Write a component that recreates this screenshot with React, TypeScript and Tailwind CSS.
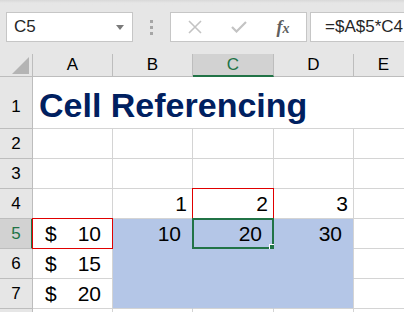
import React from 'react';

const cols = [
  { id: 'A', w: 'w-[80px]' },
  { id: 'B', w: 'w-[80px]' },
  { id: 'C', w: 'w-[81px]' },
  { id: 'D', w: 'w-[80px]' },
  { id: 'E', w: 'w-[60px]' },
];

const rows = [
  { n: 1, h: 'h-[52px]' },
  { n: 2, h: 'h-[30px]' },
  { n: 3, h: 'h-[30px]' },
  { n: 4, h: 'h-[30px]' },
  { n: 5, h: 'h-[30px]' },
  { n: 6, h: 'h-[30px]' },
  { n: 7, h: 'h-[30px]' },
  { n: 8, h: 'h-[30px]' },
];

const money: Record<number, string> = { 5: '10', 6: '15', 7: '20' };
const top: Record<string, string> = { B: '1', C: '2', D: '3' };
const mid: Record<string, string> = { B: '10', C: '20', D: '30' };

const inSel = (r: number, c: string) => r >= 5 && r <= 7 && ['B', 'C', 'D'].includes(c);

function Cell({ r, c, w }: { r: number; c: string; w: string }) {
  const sel = inSel(r, c);
  const selRight = sel && c !== 'D';
  const selBottom = sel && r !== 7;
  let content: React.ReactNode = null;
  if (c === 'A' && money[r]) {
    content = (
      <div className="flex w-full items-center justify-between pl-[12px] pr-[11px]">
        <span>$</span>
        <span>{money[r]}</span>
      </div>
    );
  } else if (r === 4 && top[c]) {
    content = <div className="w-full text-right pr-[5px]">{top[c]}</div>;
  } else if (r === 5 && mid[c]) {
    content = <div className="w-full text-right pr-[11px]">{mid[c]}</div>;
  }
  return (
    <div
      className={`relative flex shrink-0 items-center ${w} border-b border-r ${
        sel ? 'bg-[#b4c6e7]' : 'bg-white'
      } ${selRight ? 'border-r-[#b4c6e7]' : 'border-r-[#d4d4d4]'} ${
        selBottom ? 'border-b-[#b4c6e7]' : 'border-b-[#d4d4d4]'
      }`}
    >
      {content}
      {((r === 5 && c === 'A') || (r === 4 && c === 'C')) && (
        <div className="pointer-events-none absolute -left-[1px] -top-[1px] -right-[1px] -bottom-[1px] border border-[#e00000]" />
      )}
      {r === 5 && c === 'C' && (
        <div className="pointer-events-none absolute -left-[1px] -top-[1px] -right-[1px] -bottom-[1px] border-2 border-[#217346]">
          <div className="absolute -right-[4px] -bottom-[4px] h-[6px] w-[6px] bg-[#217346] outline outline-1 outline-white" />
        </div>
      )}
    </div>
  );
}

export default function App() {
  return (
    <div
      className="h-[312px] w-[404px] overflow-hidden bg-[#e6e6e6] text-[#000]"
      style={{ fontFamily: '"Liberation Sans", Arial, sans-serif' }}
    >
      {/* formula bar */}
      <div className="h-[54px] bg-gradient-to-b from-[#d8d8d8] via-[#e6e6e6] to-[#e6e6e6] bg-[length:100%_6px] bg-no-repeat pt-[12px]">
        <div className="flex h-[30px] items-stretch">
          <div className="ml-[6px] flex w-[127px] items-center justify-between border border-[#c6c6c6] bg-white pl-[7px] pr-[8px] text-[17px] text-[#262626]">
            <span>C5</span>
            <svg width="8" height="5" viewBox="0 0 8 5">
              <path d="M0 0h8L4 5z" fill="#7a7a7a" />
            </svg>
          </div>
          <div className="flex w-[37px] flex-col items-center justify-center gap-[3px]">
            <span className="h-[3px] w-[3px] bg-[#a6a6a6]" />
            <span className="h-[3px] w-[3px] bg-[#a6a6a6]" />
            <span className="h-[3px] w-[3px] bg-[#a6a6a6]" />
          </div>
          <div className="flex w-[137px] items-center border border-[#c6c6c6] bg-white">
            <div className="flex w-[46px] justify-center pl-[2px]">
              <svg width="14" height="14" viewBox="0 0 14 14">
                <path d="M1 1l12 12M13 1L1 13" stroke="#c3c3c3" strokeWidth="1.6" />
              </svg>
            </div>
            <div className="flex w-[44px] justify-center">
              <svg width="16" height="12" viewBox="0 0 16 12">
                <path d="M1 6l4.5 4.5L15 1" fill="none" stroke="#c3c3c3" strokeWidth="2.2" />
              </svg>
            </div>
            <div
              className="flex w-[44px] justify-center text-[18px] italic font-bold text-[#5f5f5f]"
              style={{ fontFamily: '"Liberation Serif", "Times New Roman", serif' }}
            >
              <span>f</span>
              <span className="text-[14px] mt-[4px]">x</span>
            </div>
          </div>
          <div className="ml-[3px] flex flex-1 items-center border border-r-0 border-[#c6c6c6] bg-white pl-[14px] text-[17px] text-[#262626]">
            =$A$5*C4
          </div>
        </div>
      </div>

      {/* column headers */}
      <div className="flex h-[23px]">
        <div className="relative flex w-[33px] shrink-0 items-end justify-end border-r border-b border-[#bdbdbd] pb-[2px] pr-[2px]">
          <svg width="17" height="17" viewBox="0 0 17 17" className="mr-[1px]">
            <path d="M17 0V17H0z" fill="#b4b4b4" />
          </svg>
        </div>
        {cols.map((c) => (
          <div
            key={c.id}
            className={`flex shrink-0 items-center justify-center text-[17px] ${c.w} border-r ${
              c.id === 'C'
                ? 'border-b-2 border-b-[#217346] bg-[#d2d2d2] text-[#217346] border-r-[#bdbdbd]'
                : 'border-b border-b-[#bdbdbd] border-r-[#bdbdbd]'
            }`}
          >
            {c.id}
          </div>
        ))}
      </div>

      {/* rows */}
      {rows.map((r) => (
        <div key={r.n} className={`flex ${r.h}`}>
          <div
            className={`flex w-[33px] shrink-0 items-center justify-center border-b border-b-[#bdbdbd] text-[17px] ${
              r.n === 5
                ? 'border-r-2 border-r-[#217346] bg-[#d2d2d2] text-[#217346] pl-[1px]'
                : 'border-r border-r-[#bdbdbd]'
            } ${r.n === 1 ? 'items-end pb-[9px]' : ''}`}
          >
            {r.n < 8 ? r.n : null}
          </div>
          {r.n === 1 ? (
            <div className="flex flex-1 items-end border-b border-[#d4d4d4] bg-white pb-[6px] pl-[6px]">
              <span className="text-[34px] font-bold leading-none text-[#002060]">Cell Referencing</span>
            </div>
          ) : (
            cols.map((c) => (
              <div key={c.id} className="text-[21px] leading-none flex">
                <Cell r={r.n} c={c.id} w={c.w} />
              </div>
            ))
          )}
        </div>
      ))}
    </div>
  );
}
